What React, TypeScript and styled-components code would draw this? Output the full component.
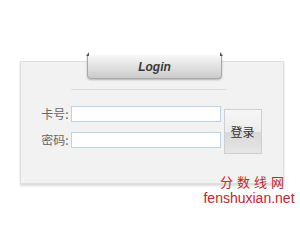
import React from "react";
import styled, { createGlobalStyle } from "styled-components";

const Global = createGlobalStyle`
  html, body { margin: 0; padding: 0; background: #fff; }
  body { font-family: "Liberation Sans", "Noto Sans CJK SC", sans-serif; }
`;

const Page = styled.div`
  position: relative;
  width: 300px;
  height: 240px;
  padding: 61px 0 0 20px;
  box-sizing: border-box;
`;

const Panel = styled.div`
  position: relative;
  width: 264px;
  height: 123px;
  box-sizing: border-box;
  background: #f2f2f2;
  border: 1px solid #dedede;
  box-shadow: 0 2px 2px rgba(0, 0, 0, 0.14);
  display: flex;
  flex-direction: column;
  align-items: center;
  padding-top: 27px;
`;

const Tab = styled.div`
  position: absolute;
  left: 66px;
  top: -7px;
  width: 133px;
  height: 23px;
  border-radius: 0 0 4px 4px;
  background: linear-gradient(#f8f8f8 0%, #e4e4e4 45%, #cbcbcb 100%);
  border: 1px solid #a8a8a8;
  border-top: none;
  box-shadow: 0 1px 2px rgba(0, 0, 0, 0.25);
  display: flex;
  align-items: center;
  justify-content: center;
  font: italic bold 12px "Liberation Sans", sans-serif;
  color: #3a3a3a;
  &::before, &::after {
    content: "";
    position: absolute;
    top: -3px;
    width: 0;
    height: 0;
    border-bottom: 4px solid #555;
  }
  &::before { left: -2px; border-left: 3px solid transparent; }
  &::after { right: -2px; border-right: 3px solid transparent; }
`;

const Divider = styled.div`
  width: 156px;
  height: 1px;
  margin-left: -6px;
  background: #dcdcdc;
`;

const FormArea = styled.div`
  display: flex;
  align-items: flex-start;
  margin-top: 16px;
  margin-left: -6px;
  gap: 3px;
`;

const Fields = styled.div`
  display: flex;
  flex-direction: column;
  gap: 10px;
`;

const Row = styled.div`
  display: flex;
  align-items: center;
  height: 16px;
  gap: 2px;
`;

const Label = styled.span`
  width: 32px;
  text-align: right;
  font: 12px/16px "Noto Sans CJK SC", sans-serif;
  color: #666;
`;

const Input = styled.input`
  width: 150px;
  height: 16px;
  box-sizing: border-box;
  border: 1px solid #bcd3e2;
  background: #fff;
  margin: 0;
  padding: 0;
`;

const Button = styled.button`
  margin-top: 3px;
  width: 38px;
  height: 45px;
  box-sizing: border-box;
  border: 1px solid #cfcfcf;
  background: linear-gradient(#f7f7f7 0%, #ececec 50%, #d8d8d8 52%, #e6e6e6 100%);
  font: 12px "Noto Sans CJK SC", sans-serif;
  color: #333;
  padding: 0;
`;

const Watermark = styled.div`
  position: absolute;
  left: 203px;
  top: 172px;
  width: 92px;
  display: flex;
  flex-direction: column;
  align-items: center;
  color: #c4262c;
`;

const WmCn = styled.span`
  font: 13px/19px "Noto Sans CJK SC", serif;
  letter-spacing: 4px;
  margin-left: 10px;
`;

const WmEn = styled.span`
  font: 14px/16px "Liberation Sans", sans-serif;
  margin-top: -1px;
`;

export default function App() {
  return (
    <>
      <Global />
      <Page>
        <Panel>
          <Tab>Login</Tab>
          <Divider />
          <FormArea>
            <Fields>
              <Row>
                <Label>卡号:</Label>
                <Input />
              </Row>
              <Row>
                <Label>密码:</Label>
                <Input type="password" />
              </Row>
            </Fields>
            <Button>登录</Button>
          </FormArea>
        </Panel>
        <Watermark>
          <WmCn>分数线网</WmCn>
          <WmEn>fenshuxian.net</WmEn>
        </Watermark>
      </Page>
    </>
  );
}
